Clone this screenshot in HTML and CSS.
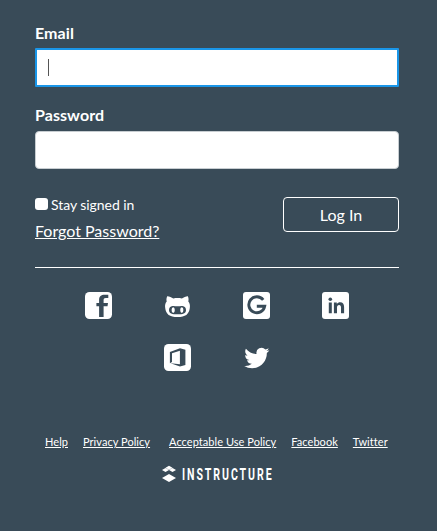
FILE: index.html
```html
<!DOCTYPE html>
<html lang="en">
<head>
<meta charset="utf-8">
<title>Log In</title>
<link rel="stylesheet" href="styles.css">
</head>
<body>
<main class="login">
  <form>
    <label class="label" for="email">Email</label>
    <div class="field focused" id="email"><span class="caret"></span></div>
    <label class="label second" for="password">Password</label>
    <div class="field plain" id="password"></div>
    <div class="actions">
      <div class="options">
        <label class="stay"><span class="checkbox"></span>Stay signed in</label>
        <a class="forgot" href="#">Forgot Password?</a>
      </div>
      <button class="submit" type="button">Log In</button>
    </div>
  </form>
  <nav class="social">
    <a href="#"><svg viewBox="0 0 27 27"><rect width="27" height="27" rx="4.5" fill="#fff"/><path class="cut" d="M14.1 25V14.2h-2.700v-3.200h2.700V8c0-3.700 2-5.200 5.500-5.200h3.700v3.300h-2.500c-1.700 0-2.200.7-2.200 2.200v2.700h4.400l-.5 3.200h-3.900V25z"/></svg></a>
    <a href="#"><svg viewBox="0 0 27 27"><path fill="#fff" d="M3.200 4.200c1.800-.1 4.400 1 6.100 2.300 2.700-.6 5.900-.6 8.600 0 1.700-1.300 4.300-2.400 6-2.300.8 1.900.8 3.800.4 5.300 1.500 1.700 1.900 3.900 1.500 6.400-.8 6.200-4.300 9.100-12.300 9.100S2 22.100 1.200 15.900C.8 13.400 1.200 11.200 2.700 9.500c-.4-1.500-.4-3.400.5-5.300z"/><path class="cut" d="M8.500 14c1.700-.2 3.200.3 5 .3s3.300-.5 5-.3c2.200.3 3.500 1.800 3.500 3.900 0 3.600-3.100 4.400-8.500 4.400S5 21.500 5 17.900c0-2.100 1.300-3.600 3.500-3.900z"/><ellipse cx="9.200" cy="18.100" rx="1.600" ry="2.900" fill="#fff"/><ellipse cx="17.800" cy="18.100" rx="1.600" ry="2.900" fill="#fff"/></svg></a>
    <a href="#"><svg viewBox="0 0 27 27"><rect width="27" height="27" rx="3" fill="#fff"/><path fill="none" stroke="#394b58" stroke-width="2.900" d="M20.200 7.900A8 8 0 1 0 21.700 14.300H13.800"/></svg></a>
    <a href="#"><svg viewBox="0 0 27 27"><rect width="27" height="27" rx="3" fill="#fff"/><circle class="cut" cx="8.300" cy="7.300" r="1.800"/><path class="cut" d="M6.800 10.500h3v10.700h-3zM11.900 10.500h2.900V12c.8-1.200 2-1.800 3.400-1.800 2.600 0 3.900 1.700 3.900 4.700v6.300h-3.100v-5.700c0-1.700-.6-2.600-1.900-2.600-1.400 0-2.100 1-2.100 2.700v5.600h-3.100z"/></svg></a>
    <a class="lower" href="#"><svg viewBox="0 0 27 27"><rect width="27" height="27" rx="4.500" fill="#fff"/><path class="cut" d="M5.900 8.100 16 4.300 21.400 5.700V21L16 22.600 6.500 19.200 15.900 20.300V6.700L8 9.200V18L5.900 19.200z"/></svg></a>
    <a href="#"><svg viewBox="0 0 27 27"><path fill="#fff" transform="translate(1.200 1.400) scale(1.050)" d="M23.950 4.570a10 10 0 0 1-2.820.77 4.960 4.960 0 0 0 2.160-2.720c-.95.550-2 .950-3.130 1.180a4.920 4.920 0 0 0-8.380 4.480C7.690 8.090 4.070 6.130 1.640 3.160a4.920 4.920 0 0 0 1.520 6.570 4.900 4.900 0 0 1-2.230-.61v.06a4.920 4.920 0 0 0 3.950 4.830 5 5 0 0 1-2.210.08 4.940 4.940 0 0 0 4.600 3.420A9.870 9.870 0 0 1 0 19.540a14 14 0 0 0 7.550 2.210c9.050 0 14-7.500 14-13.980 0-.21 0-.42-.02-.63a9.940 9.940 0 0 0 2.460-2.550z"/></svg></a>
  </nav>
  <footer>
    <div class="links">
      <a href="#">Help</a><a href="#">Privacy Policy</a><a class="wide" href="#">Acceptable Use Policy</a><a href="#">Facebook</a><a href="#">Twitter</a>
    </div>
    <svg class="brand" viewBox="0 0 112 18" aria-label="Instructure">
      <path fill="#fff" d="M7 8.900 14 13 7 17 0 13zM3.500 3 7 5.100 3.500 7.100 0 5.100zM10.500 3 14 5.100 10.500 7.100 7 5.100zM7 .7 10.500 2.700 7 4.700 3.500 2.700z"/>
      <g transform="translate(20 15) scale(.64 1)"><text class="wordmark" x="0" y="0" textLength="140">INSTRUCTURE</text></g>
    </svg>
  </footer>
</main>
</body>
</html>
```
FILE: styles.css
```css
* { box-sizing: border-box; }
body {
  margin: 0;
  background: #394b58;
  color: #fff;
  font-family: Lato, sans-serif;
}
a { color: inherit; }
.login { padding: 23px 38px 0 35px; }
.label {
  display: block;
  height: 20px;
  margin-bottom: 5px;
  font-size: 16px;
  line-height: 20px;
  font-weight: 700;
  letter-spacing: .07px;
}
.second { margin-top: 18px; }
.field {
  height: 39px;
  border: 1px solid #c7cdd1;
  border-radius: 4px;
  background: #fff;
}
.plain { height: 38px; margin-top: 6px; }
.focused {
  padding: 9px 11px;
  border: 2px solid #1a96e8;
  border-radius: 1px;
}
.caret {
  display: block;
  width: 1px;
  height: 17px;
  background: #555;
}
.actions {
  display: flex;
  justify-content: space-between;
  height: 99px;
  padding-top: 28px;
  border-bottom: 1px solid #fff;
}
.options { display: flex; flex-direction: column; }
.stay {
  display: flex;
  align-items: center;
  height: 14px;
  font-size: 14px;
  letter-spacing: -.05px;
}
.checkbox {
  width: 13px;
  height: 12px;
  margin-right: 3px;
  border-radius: 3px;
  background: #fff;
}
.forgot { margin-top: 10px; font-size: 16px; line-height: 20px; }
.submit {
  width: 116px;
  height: 35px;
  padding: 0;
  border: 1px solid #fff;
  border-radius: 4px;
  background: none;
  color: #fff;
  font: 16px Lato, sans-serif;
}
.social {
  display: grid;
  grid-template-columns: repeat(4, 79px);
  grid-auto-rows: 27px;
  row-gap: 25px;
  justify-items: center;
  margin: 24px 0 0 24px;
}
.social a, .social svg { display: block; width: 27px; height: 27px; }
.lower { grid-column: 2; }
.cut { fill: #394b58; }
footer { display: flex; flex-direction: column; }
.links {
  display: flex;
  gap: 15px;
  margin: 64px 0 0 10px;
  font-size: 11px;
  line-height: 14px;
  letter-spacing: .05px;
  white-space: nowrap;
}
.wide { margin-left: 4px; }
.brand { width: 112px; height: 18px; margin: 16px 0 0 127px; }
.wordmark { fill: #fff; font: 700 16.500px Roboto, sans-serif; }
```
